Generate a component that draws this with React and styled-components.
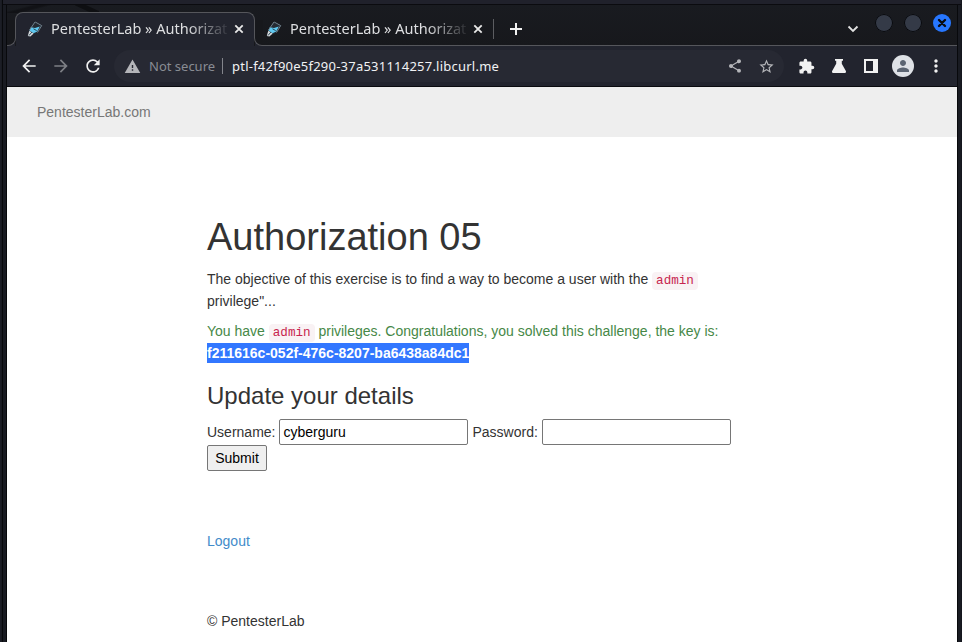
import React from "react";
import styled, { createGlobalStyle } from "styled-components";
import { MdArrowBack, MdArrowForward, MdRefresh, MdWarning, MdShare, MdStarBorder, MdExtension, MdMoreVert, MdPerson } from "react-icons/md";

const GlobalStyle = createGlobalStyle`
  *, *::before, *::after { box-sizing: border-box; }
  html, body { margin: 0; height: 642px; overflow: hidden; background: #181a21; }
`;

const Window = styled.div`
  width: 962px;
  height: 642px;
  display: flex;
  flex-direction: column;
  background: #191b22;
  padding: 0 4px 0 6px;
  border-left: 1px solid #1c1e26;
  border-right: 1px solid #14161d;
  box-shadow: inset 1px 0 #191b22, inset 2px 0 #08090c;
`;

const Frame = styled.div`
  height: 5px;
  flex: none;
  margin: 0 -4px;
  background: #20212b;
  border-bottom: 1px solid #0b0b0f;
`;

const Browser = styled.div`
  flex: 1;
  width: 950px;
  display: flex;
  flex-direction: column;
  box-shadow: -1px 0 #08090c, 1px 0 #08090c;
`;

const TabStrip = styled.div`
  height: 41px;
  flex: none;
  display: flex;
  align-items: flex-end;
  background:
    linear-gradient(165deg, transparent 6px, #111216 8px 10px, transparent 12px) 0 0 / 50px 8px no-repeat,
    linear-gradient(205deg, transparent 5px, #0e0f12 6px 10px, transparent 11px) 68px 0 / 24px 8px no-repeat,
    linear-gradient(#191b20, #17181c);
  font: 14.5px "Noto Sans", sans-serif;
  color: #dedfe1;
`;

const LeftFlare = styled.div`
  width: 9px;
  height: 26px;
  margin-right: -1px;
  background: #17181c;
  border-bottom: 1px solid #55565b;
  border-right: 1px solid #55565b;
  border-bottom-right-radius: 8px;
`;

const RightFlare = styled.div`
  width: 9px;
  height: 26px;
  margin-left: -1px;
  background: #17181c;
  border-bottom: 1px solid #55565b;
  border-left: 1px solid #55565b;
  border-bottom-left-radius: 8px;
`;

const FlareBase = styled.div`
  display: flex;
  background: linear-gradient(to top, #22242e 9px, transparent 9px);
`;

const ActiveTab = styled.div`
  width: 240px;
  height: 34px;
  display: flex;
  align-items: center;
  padding: 0 10px 2px 11px;
  background: #22242e;
  border: 1px solid #55565b;
  border-bottom: 0;
  border-radius: 8px 8px 0 0;
  clip-path: polygon(0 0, 100% 0, 100% 26px, 239px 26px, 239px 100%, 1px 100%, 1px 26px, 0 26px);
`;

const RestTabs = styled.div`
  flex: 1;
  height: 34px;
  display: flex;
  align-items: center;
  padding-left: 3px;
  border-bottom: 1px solid #55565b;
`;

const TabTitle = styled.span`
  width: 176px;
  margin: 0 0 2px 8px;
  flex: none;
  white-space: nowrap;
  mask-image: linear-gradient(90deg, #000 136px, transparent 180px);
`;

const CloseIcon = styled.svg`
  width: 10px;
  height: 10px;
  margin-left: 7px;
  flex: none;
`;

const TabDivider = styled.i`
  width: 1px;
  height: 20px;
  margin-left: 10px;
  background: #5c5d61;
`;

const PlusIcon = styled.svg`
  width: 12px;
  height: 12px;
  margin-left: 16px;
`;

const WindowControls = styled.div`
  margin: 0 6px 11px auto;
  display: flex;
  align-items: center;
  gap: 11px;
`;

const ChevronIcon = styled.svg`
  width: 12px;
  height: 8px;
  margin: 12px 5px 0 0;
`;

const ControlDot = styled.span`
  width: 18px;
  height: 18px;
  border-radius: 50%;
  display: grid;
  place-items: center;
  background: ${(p) => (p.$close ? "#2777ff" : "#343a47")};
  box-shadow: ${(p) => (p.$close ? "none" : "inset 0 0 0 1px #08090c")};
`;

const Toolbar = styled.div`
  height: 41px;
  flex: none;
  display: flex;
  align-items: center;
  padding-left: 12px;
  background: #22242e;
  border-bottom: 1px solid #0a0b0f;
  color: #f1f1f1;
`;

const NavButtons = styled.div`
  display: flex;
  gap: 12px;
  svg { display: block; }
`;

const AddressBar = styled.div`
  width: 670px;
  height: 32px;
  margin-left: 11px;
  display: flex;
  align-items: center;
  padding: 0 9px 0 10px;
  border-radius: 16px;
  background: #272933;
  font: 13px "Noto Sans", sans-serif;
  color: #f1f2f4;
  white-space: nowrap;
  svg { flex: none; color: #b4b5b9; }
`;

const Security = styled.span`
  width: 67px;
  margin-left: 8px;
  color: #898c93;
`;

const UrlDivider = styled.i`
  width: 1px;
  height: 16px;
  margin: 0 9px 0 6px;
  background: #83858c;
`;

const Url = styled.span`
  flex: 1;
  letter-spacing: 0.23px;
`;

const AddressActions = styled.div`
  display: flex;
  align-items: center;
  gap: 15px;
`;

const ToolActions = styled.div`
  display: flex;
  align-items: center;
  margin-left: 14px;
  svg { display: block; }
`;

const ToolIcon = styled.svg`
  width: 16px;
  height: 16px;
  margin-left: 16px;
`;

const Avatar = styled.span`
  width: 22px;
  height: 22px;
  margin: 0 12px 0 13px;
  border-radius: 50%;
  display: grid;
  place-items: center;
  background: #dee1e6;
  color: #5b6472;
`;

const Page = styled.div`
  flex: 1;
  background: #fff;
  font: 14px/20px "Liberation Sans", Arial, sans-serif;
  color: #333;
`;

const Navbar = styled.header`
  height: 50px;
  padding: 15px 30px;
  background: #eee;
  color: #777;
`;

const Container = styled.main`
  width: 550px;
  margin-left: 200px;
  padding-top: 79px;
`;

const Title = styled.h1`
  margin: 0 0 10px;
  font-size: 38px;
  line-height: 42px;
  font-weight: 400;
`;

const Paragraph = styled.p`
  margin: 0 0 8px;
  line-height: 22px;
  color: ${(p) => (p.$success ? "#468847" : "#333")};
`;

const Code = styled.code`
  padding: 2px 4px;
  border-radius: 4px;
  background: #f9f2f4;
  color: #c7254e;
  font: 12.6px/18px "Liberation Mono", monospace;
  white-space: nowrap;
`;

const Key = styled.strong`
  display: inline-block;
  height: 20px;
  line-height: 20px;
  background: #3277ff;
  color: #fff;
`;

const Subtitle = styled.h2`
  margin: 19px 0 10px;
  font-size: 24px;
  line-height: 26px;
  font-weight: 400;
`;

const Form = styled.form`
  display: flex;
  flex-wrap: wrap;
  align-items: center;
  column-gap: 4px;
`;

const Field = styled.input`
  width: 189px;
  height: 26px;
  padding: 1px 3px;
  border: 1px solid #767676;
  border-radius: 2px;
  background: #fff;
  color: #000;
  font: 14px "Liberation Sans", Arial, sans-serif;
`;

const Submit = styled.button`
  width: 60px;
  height: 26px;
  padding: 0;
  border: 1px solid #767676;
  border-radius: 2px;
  background: #efefef;
  color: #000;
  font: 14px "Liberation Sans", Arial, sans-serif;
`;

const Logout = styled.a`
  display: block;
  margin-top: 60px;
  color: #428bca;
`;

const Footer = styled.footer`
  margin-top: 60px;
`;

const Favicon = () => (
  <svg width="16" height="16" viewBox="0 0 16 16">
    <path d="M8 0.8 15 4.5 10.5 11.5 4 14.8 1 14.5 2.5 9Z" fill="#252b33" />
    <path d="M3.8 6.2 8 7 12.8 5.6 10.2 10.6 6.5 12.2 2.5 9.6Z" fill="#5fc8f0" />
    <path d="M2.3 9.8 6.6 12.6 3.4 15.4 .8 15Z" fill="#d6dade" />
    <path d="m8.2 1 6.5 3.6-4.2 6.9M8 1 2.4 9.2" stroke="#71828e" fill="none" />
    <path d="m6.5 7.8 3.2 1.8M2 14.5l3-3.5" stroke="#2b4552" fill="none" />
  </svg>
);

const Close = () => (
  <CloseIcon viewBox="0 0 10 10">
    <path d="m1.3 1.3 7.4 7.4m0-7.4L1.3 8.7" stroke="#e9e9e9" strokeWidth="1.8" />
  </CloseIcon>
);

export default function App() {
  return (
    <>
      <GlobalStyle />
      <Window>
        <Frame />
        <Browser>
          <TabStrip>
            <FlareBase><LeftFlare /></FlareBase>
            <ActiveTab>
              <Favicon />
              <TabTitle>PentesterLab » Authorizat</TabTitle>
              <Close />
            </ActiveTab>
            <FlareBase><RightFlare /></FlareBase>
            <RestTabs>
              <Favicon />
              <TabTitle>PentesterLab » Authorizat</TabTitle>
              <Close />
              <TabDivider />
              <PlusIcon viewBox="0 0 12 12"><path d="M6 0v12M0 6h12" stroke="#f1f1f1" strokeWidth="2" /></PlusIcon>
              <WindowControls>
                <ChevronIcon viewBox="0 0 12 8"><path d="m1.5 1.5 4.5 4.5 4.5-4.5" fill="none" stroke="#e2e2e2" strokeWidth="1.8" /></ChevronIcon>
                <ControlDot />
                <ControlDot />
                <ControlDot $close>
                  <svg width="10" height="10" viewBox="0 0 10 10"><path d="m2 2 6 6m0-6L2 8" stroke="#090c14" strokeWidth="2.4" strokeLinecap="round" /></svg>
                </ControlDot>
              </WindowControls>
            </RestTabs>
          </TabStrip>
          <Toolbar>
            <NavButtons>
              <MdArrowBack size={20} />
              <MdArrowForward size={20} color="#7d7f85" />
              <MdRefresh size={20} />
            </NavButtons>
            <AddressBar>
              <MdWarning size={17} />
              <Security>Not secure</Security>
              <UrlDivider />
              <Url>ptl-f42f90e5f290-37a531114257.libcurl.me</Url>
              <AddressActions>
                <MdShare size={16} />
                <MdStarBorder size={17} />
              </AddressActions>
            </AddressBar>
            <ToolActions>
              <MdExtension size={17} />
              <ToolIcon viewBox="0 0 16 16"><path d="M4 1h8v1.8h-1.2v3L15 13.2Q15.3 15 14 15H2Q.7 15 1 13.2l4.2-7.4v-3H4Z" fill="currentColor" /></ToolIcon>
              <ToolIcon viewBox="0 0 16 16"><path fillRule="evenodd" d="M1 1h14v14H1ZM3 3v10h7V3Z" fill="currentColor" /></ToolIcon>
              <Avatar><MdPerson size={18} /></Avatar>
              <MdMoreVert size={20} />
            </ToolActions>
          </Toolbar>
          <Page>
            <Navbar>PentesterLab.com</Navbar>
            <Container>
              <Title>Authorization 05</Title>
              <Paragraph>
                The objective of this exercise is to find a way to become a user with the <Code>admin</Code> privilege"...
              </Paragraph>
              <Paragraph $success>
                You have <Code>admin</Code> privileges. Congratulations, you solved this challenge, the key is: <Key>f211616c-052f-476c-8207-ba6438a84dc1</Key>
              </Paragraph>
              <Subtitle>Update your details</Subtitle>
              <Form>
                <label htmlFor="username">Username:</label>
                <Field id="username" defaultValue="cyberguru" />
                <label htmlFor="password">Password:</label>
                <Field id="password" type="password" />
                <Submit type="button">Submit</Submit>
              </Form>
              <Logout>Logout</Logout>
              <Footer>© PentesterLab</Footer>
            </Container>
          </Page>
        </Browser>
      </Window>
    </>
  );
}
